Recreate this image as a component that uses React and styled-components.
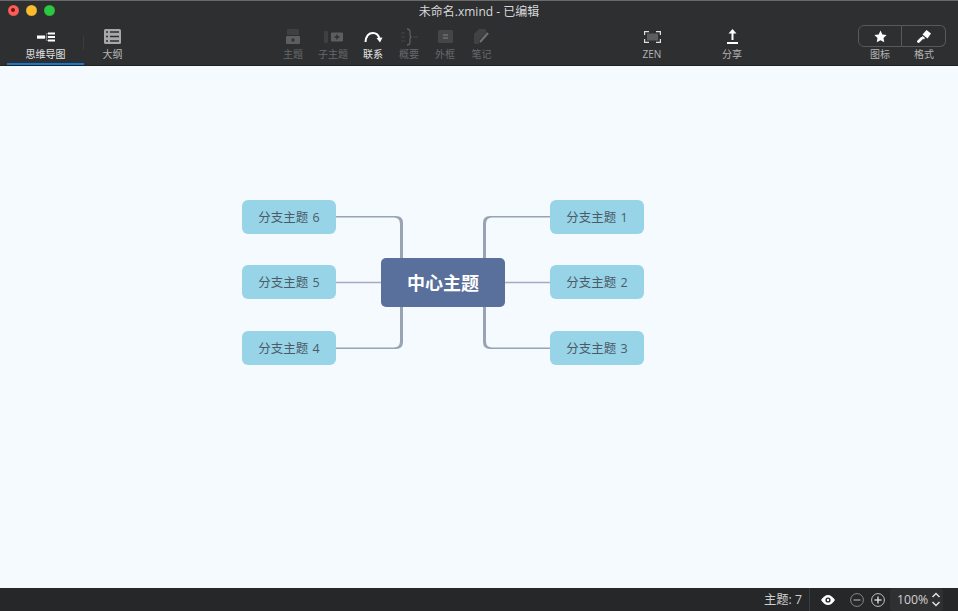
import React from "react";
import styled, { createGlobalStyle } from "styled-components";

const GlobalStyle = createGlobalStyle`
  html, body {
    margin: 0;
    padding: 0;
    height: 100%;
    overflow: hidden;
  }
  body {
    font-family: "Open Sans", "Noto Sans CJK SC", sans-serif;
  }
`;

const Window = styled.div`
  width: 958px;
  height: 611px;
  display: flex;
  flex-direction: column;
  background: #f5faff;
`;

// Header

const Header = styled.header`
  height: 66px;
  flex: none;
  background: #2e2f31;
  border-top: 1px solid #6a6a6b;
  box-sizing: border-box;
  border-bottom: 1px solid #202020;
  display: flex;
  flex-direction: column;
`;

const TitleBar = styled.div`
  height: 20px;
  flex: none;
  display: flex;
  align-items: center;
  justify-content: center;
  position: relative;
  color: #d8d8d8;
  font-size: 12px;
`;

const Lights = styled.div`
  position: absolute;
  left: 7.5px;
  top: 3.5px;
  display: flex;
  gap: 7px;
`;

const Light = styled.span`
  width: 11px;
  height: 11px;
  border-radius: 50%;
  background: ${(p) => p.$color};
  box-shadow: inset 0 0 0 0.5px rgba(0, 0, 0, 0.15);
  display: flex;
  align-items: center;
  justify-content: center;

  &::after {
    content: "";
    width: 4px;
    height: 4px;
    border-radius: 50%;
    background: ${(p) => (p.$dot ? "#7a1010" : "transparent")};
  }
`;

const Toolbar = styled.div`
  flex: 1;
  display: grid;
  grid-template-columns: 7px 77px 57px 134px 36px 44px 36px 36px 36px 37px 132px 40px 40px 40px 106px 44px 44px 1fr;
`;

const Tool = styled.div`
  grid-column: ${(p) => p.$col};
  position: relative;
  display: flex;
  flex-direction: column;
  align-items: center;
  height: 44px;
  box-sizing: border-box;
  padding-top: 6px;
  color: ${(p) => (p.$dim ? "#69696b" : p.$bright ? "#e4e4e4" : "#b4b4b4")};
  font-size: 10px;
  line-height: 14px;
  border-bottom: 2px solid ${(p) => (p.$active ? "#1b78d0" : "transparent")};

  &::after {
    content: "";
    display: ${(p) => (p.$sep ? "block" : "none")};
    position: absolute;
    right: 0;
    top: 15px;
    width: 1px;
    height: 14px;
    background: #3b3c3e;
  }
`;

const ToolIcon = styled.div`
  height: 19px;
  display: flex;
  align-items: center;
  justify-content: center;
  margin-bottom: 1px;
`;

const SegButton = styled.div`
  width: 44px;
  height: 22px;
  margin-top: -2px;
  display: flex;
  align-items: center;
  justify-content: center;
  border: 1px solid #58595b;
  box-sizing: border-box;
  border-left-width: ${(p) => (p.$right ? 0 : "1px")};
  border-radius: ${(p) => (p.$right ? "0 6px 6px 0" : "6px 0 0 6px")};
`;

// Canvas

const Canvas = styled.main`
  flex: 1;
  position: relative;
`;

const Lines = styled.svg`
  position: absolute;
  inset: 0;
`;

const Topic = styled.div`
  position: absolute;
  left: ${(p) => p.$x}px;
  top: ${(p) => p.$y}px;
  width: 94px;
  height: 34px;
  padding-bottom: 2px;
  box-sizing: border-box;
  border-radius: 6px;
  background: #98d4e8;
  color: #4b5b66;
  font-size: 12.5px;
  word-spacing: 1px;
  display: flex;
  align-items: center;
  justify-content: center;
`;

const CentralTopic = styled.div`
  position: absolute;
  left: 381px;
  top: 192px;
  width: 124px;
  height: 49px;
  padding-bottom: 2px;
  box-sizing: border-box;
  border-radius: 5px;
  background: #58709b;
  color: #fff;
  font-size: 18px;
  font-weight: 700;
  display: flex;
  align-items: center;
  justify-content: center;
`;

// Status bar

const StatusBar = styled.footer`
  height: 23px;
  flex: none;
  background: #262729;
  display: flex;
  align-items: center;
  justify-content: flex-end;
  color: #d0d0d0;
  font-size: 12.3px;
`;

const Count = styled.span`
  padding-right: 7px;
  border-right: 1px solid #3c3d3f;
  line-height: 23px;
  margin-right: 11px;
`;

const ZoomButton = styled.span`
  display: flex;
  margin-left: ${(p) => p.$gap}px;
`;

const ZoomValue = styled.div`
  margin: 0 15px 0 5px;
  width: 53px;
  height: 23px;
  box-sizing: border-box;
  padding: 0 2px 0 7px;
  background: #2f3032;
  border-radius: 3px;
  display: flex;
  align-items: center;
  justify-content: space-between;
`;

const MapIcon = () => (
  <svg width="18" height="10" viewBox="0 0 18 10" fill="#fff">
    <rect x="0" y="3.500" width="8" height="3.200" />
    <path d="M8 5h1.500V1.500H11M9.500 5H11M9.500 5v3.500H11" fill="none" stroke="#9a9a9a" strokeWidth="0.7" />
    <rect x="11" y="0.500" width="7" height="2" />
    <rect x="11" y="4" width="7" height="2" />
    <rect x="11" y="7.500" width="7" height="2" />
  </svg>
);

const OutlineIcon = () => (
  <svg width="17" height="15" viewBox="0 0 17 15">
    <rect width="17" height="15" rx="1.500" fill="#a8a8a8" />
    <path d="M2 3h2M2 7.500h2M2 12h2M6 3h9M6 7.500h9M6 12h9" stroke="#2e2f31" strokeWidth="1.400" />
  </svg>
);

const TopicIcon = () => (
  <svg width="14" height="15" viewBox="0 0 14 15">
    <path d="M2 0h10a1 1 0 0 1 1 1v5H1V1a1 1 0 0 1 1-1z" fill="#3f4042" />
    <rect x="0" y="7" width="14" height="8" rx="1" fill="#5d5e60" />
    <path d="M7 9v4M5 11h4" stroke="#2e2f31" strokeWidth="1.200" />
  </svg>
);

const SubtopicIcon = () => (
  <svg width="19" height="12" viewBox="0 0 19 12">
    <rect x="0" y="0" width="4" height="12" rx="1" fill="#3f4042" />
    <rect x="7" y="1.500" width="12" height="9" rx="1" fill="#5d5e60" />
    <path d="M13 3.500v5M10.500 6h5" stroke="#2e2f31" strokeWidth="1.300" />
  </svg>
);

const RelationIcon = () => (
  <svg width="19" height="12" viewBox="0 0 19 12" fill="none">
    <path d="M1.500 11C2 5 5 2 9 2s5.500 2 6.500 5.500" stroke="#fff" strokeWidth="2" />
    <path d="M12.500 7l6-.5-2.500 5z" fill="#fff" />
  </svg>
);

const SummaryIcon = () => (
  <svg width="17" height="18" viewBox="0 0 17 18" fill="none">
    <path d="M0 5h4M0 9h4M0 13h4M12 9h5" strokeWidth="1.200" stroke="#464749" />
    <path
      d="M6 1c2 0 3 1 3 3v3c0 1 .5 2 1.500 2c-1 0-1.500 1-1.500 2v3c0 2-1 3-3 3"
      strokeWidth="1.300"
      stroke="#5e5f61"
    />
  </svg>
);

const BoundaryIcon = () => (
  <svg width="15" height="13" viewBox="0 0 15 13">
    <rect width="15" height="13" rx="1.500" fill="#454648" />
    <path d="M5 5h5M5 8h5" stroke="#808183" strokeWidth="1.200" />
  </svg>
);

const NoteIcon = () => (
  <svg width="15" height="15" viewBox="0 0 15 15" fill="none">
    <path d="M5 0h6a1 1 0 0 1 1 1v3l-7 7v4H1a1 1 0 0 1-1-1V5z" fill="#414244" />
    <path d="M6 13L14 4" stroke="#6f7072" strokeWidth="2.200" />
  </svg>
);

const ZenIcon = () => (
  <svg width="17" height="12" viewBox="0 0 17 12" fill="none">
    <rect x="3" y="2.500" width="11" height="7" fill="#5c5d5f" />
    <path d="M.6 4V.6H5M12 .6h4.400V4M16.400 8v3.400H12M5 11.400H.6V8" stroke="#e0e0e0" strokeWidth="1.200" />
  </svg>
);

const ShareIcon = () => (
  <svg width="11" height="15" viewBox="0 0 11 15" fill="#fff">
    <path d="M5.500 0L9.500 4.500H6.500V11H4.500V4.500H1.500z" />
    <rect x="0" y="13" width="11" height="2" />
  </svg>
);

const StarIcon = () => (
  <svg width="13" height="13" viewBox="0 0 24 24" fill="#fff">
    <path d="M12 1l3.400 7.300 7.900 1-5.800 5.500 1.500 7.900-7-3.900-7 3.900 1.500-7.900L.7 9.300l7.900-1z" />
  </svg>
);

const BrushIcon = () => (
  <svg width="14" height="13" viewBox="0 0 14 13" fill="none">
    <path d="M9.500 0L14 3.500 10.500 8.500 5.500 4.500z" fill="#fff" />
    <path d="M5.500 6l2.500 2-1 1.500-2.500-2z" fill="#fff" />
    <path d="M4.500 8.500L1.500 11.500" stroke="#fff" strokeWidth="2.800" strokeLinecap="round" />
  </svg>
);

const EyeIcon = () => (
  <svg width="14" height="10" viewBox="0 0 14 10">
    <path d="M0 5c2-3 4.500-5 7-5s5 2 7 5c-2 3-4.500 5-7 5s-5-2-7-5z" fill="#fff" />
    <circle cx="7" cy="5" r="2.600" fill="#262729" />
    <circle cx="7" cy="5" r="1.200" fill="#fff" />
  </svg>
);

const CircleIcon = ({ plus, color }) => (
  <svg width="14" height="14" viewBox="0 0 14 14" fill="none" stroke={color}>
    <circle cx="7" cy="7" r="6.400" strokeWidth="0.800" />
    <path d="M3.500 7h7" strokeWidth="1.300" />
    {plus && <path d="M7 3.500v7" strokeWidth="1.300" />}
  </svg>
);

const StepperIcon = () => (
  <svg width="10" height="15" viewBox="0 0 10 15" fill="none" stroke="#e0e0e0" strokeWidth="1.500">
    <path d="M1.500 5L5 1.500 8.500 5M1.500 10L5 13.500 8.500 10" />
  </svg>
);

// one connector, thin at the branch and thick where it meets the central topic
const CONNECTOR = "M336 150H396q7 0 7 7V195H400V158q0-6.500-6-6.500H336z";

const topics = [
  { label: "分支主题 6", x: 242, y: 134 },
  { label: "分支主题 5", x: 242, y: 199 },
  { label: "分支主题 4", x: 242, y: 265 },
  { label: "分支主题 1", x: 550, y: 134 },
  { label: "分支主题 2", x: 550, y: 199 },
  { label: "分支主题 3", x: 550, y: 265 },
];

export default function App() {
  return (
    <>
      <GlobalStyle />
      <Window>
        <Header>
          <TitleBar>
            <Lights>
              <Light $color="#fb5f57" $dot />
              <Light $color="#fcbc2e" />
              <Light $color="#2bc840" />
            </Lights>
            未命名.xmind - 已编辑
          </TitleBar>
          <Toolbar>
            <Tool $col={2} $active $bright $sep>
              <ToolIcon><MapIcon /></ToolIcon>思维导图
            </Tool>
            <Tool $col={3}>
              <ToolIcon><OutlineIcon /></ToolIcon>大纲
            </Tool>
            <Tool $col={5} $dim>
              <ToolIcon><TopicIcon /></ToolIcon>主题
            </Tool>
            <Tool $col={6} $dim>
              <ToolIcon><SubtopicIcon /></ToolIcon>子主题
            </Tool>
            <Tool $col={7} $bright>
              <ToolIcon><RelationIcon /></ToolIcon>联系
            </Tool>
            <Tool $col={8} $dim>
              <ToolIcon><SummaryIcon /></ToolIcon>概要
            </Tool>
            <Tool $col={9} $dim>
              <ToolIcon><BoundaryIcon /></ToolIcon>外框
            </Tool>
            <Tool $col={10} $dim>
              <ToolIcon><NoteIcon /></ToolIcon>笔记
            </Tool>
            <Tool $col={12}>
              <ToolIcon><ZenIcon /></ToolIcon>ZEN
            </Tool>
            <Tool $col={14}>
              <ToolIcon><ShareIcon /></ToolIcon>分享
            </Tool>
            <Tool $col={16}>
              <SegButton><StarIcon /></SegButton>图标
            </Tool>
            <Tool $col={17}>
              <SegButton $right><BrushIcon /></SegButton>格式
            </Tool>
          </Toolbar>
        </Header>
        <Canvas>
          <Lines width="958" height="522" fill="none">
            <g fill="#98a3b4">
              <path d={CONNECTOR} />
              <path d={CONNECTOR} transform="translate(0 433) scale(1 -1)" />
              <path d={CONNECTOR} transform="translate(886 0) scale(-1 1)" />
              <path d={CONNECTOR} transform="translate(886 433) scale(-1 -1)" />
            </g>
            <path d="M336 216.500h45M505 216.500h45" stroke="#a3adbe" strokeWidth="1.500" />
          </Lines>
          {topics.map((t) => (
            <Topic key={t.label} $x={t.x} $y={t.y}>{t.label}</Topic>
          ))}
          <CentralTopic>中心主题</CentralTopic>
        </Canvas>
        <StatusBar>
          <Count>主题: 7</Count>
          <EyeIcon />
          <ZoomButton $gap={15}><CircleIcon color="#a0a0a0" /></ZoomButton>
          <ZoomButton $gap={7}><CircleIcon plus color="#e8e8e8" /></ZoomButton>
          <ZoomValue>100%<StepperIcon /></ZoomValue>
        </StatusBar>
      </Window>
    </>
  );
}
